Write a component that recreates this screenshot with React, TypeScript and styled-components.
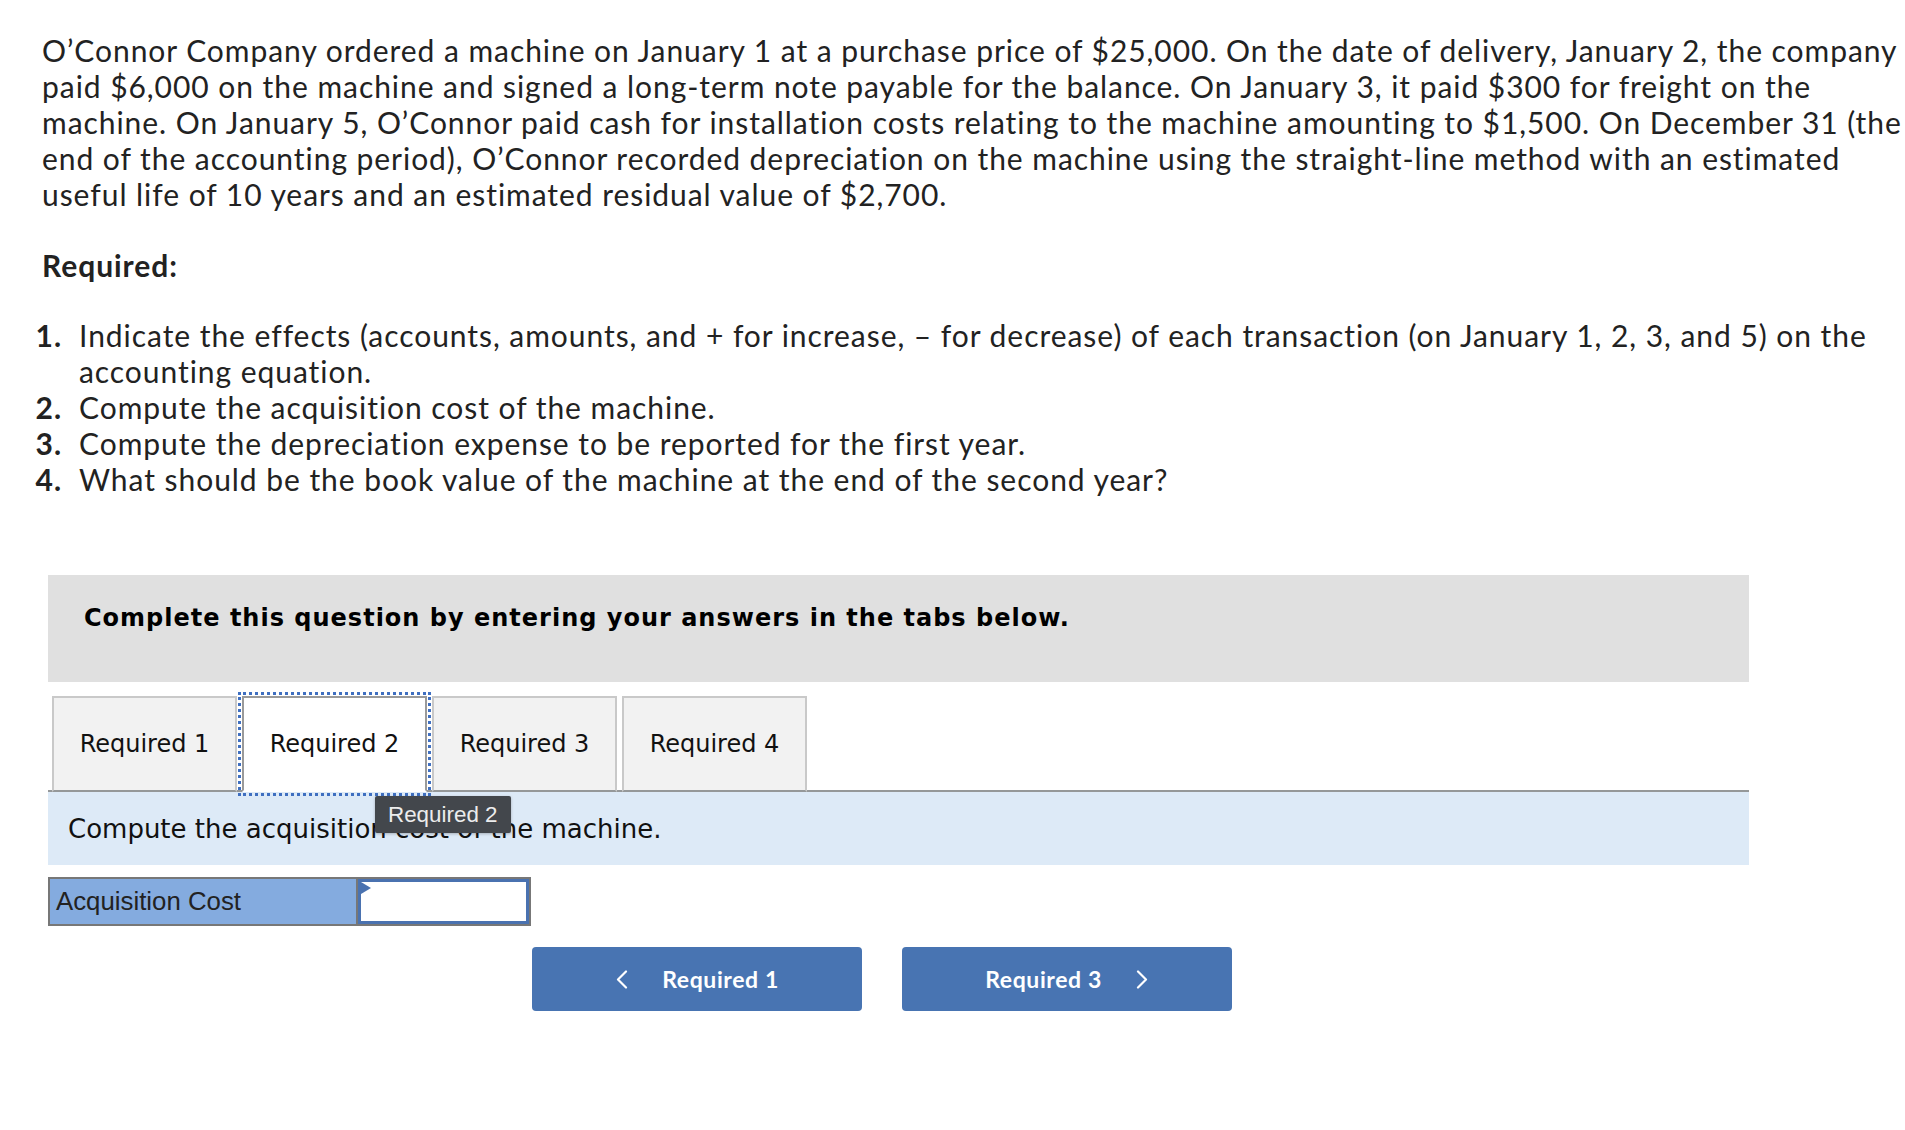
import styled, { createGlobalStyle } from "styled-components";

const GlobalStyle = createGlobalStyle`
  body {
    margin: 0;
    background: #ffffff;
  }
`;

const Page = styled.div`
  padding: 32px 0 60px 42px;
  font-family: Lato, "Noto Sans", sans-serif;
  color: #222222;
`;

const Problem = styled.p`
  margin: 0;
  font-size: 30px;
  line-height: 36px;
  letter-spacing: 0.95px;
`;

const RequiredHeading = styled.h4`
  margin: 35px 0 0;
  font-size: 30px;
  line-height: 36px;
  font-weight: 700;
  letter-spacing: 0.95px;
`;

const TaskList = styled.ol`
  list-style: none;
  margin: 34px 0 0 -12px;
  padding: 0;
  font-size: 30px;
  line-height: 36px;
  letter-spacing: 0.95px;
`;

const TaskItem = styled.li`
  display: grid;
  grid-template-columns: 32px 1fr;
  column-gap: 17px;
`;

const TaskNumber = styled.span`
  text-align: right;
  font-weight: 700;
`;

const Panel = styled.section`
  margin: 78px 0 0 6px;
  width: 1701px;
`;

const Banner = styled.div`
  height: 107px;
  box-sizing: border-box;
  padding: 29px 0 0 36px;
  background: #e0e0e0;
  font-family: "DejaVu Sans", Verdana, sans-serif;
  font-size: 24px;
  line-height: 28px;
  letter-spacing: 1px;
  font-weight: 700;
  color: #000000;
`;

const TabBar = styled.div`
  display: flex;
  gap: 5px;
  padding: 14px 0 0 4px;
  border-bottom: 2px solid #959899;
`;

const Tab = styled.button<{ $active?: boolean }>`
  position: relative;
  width: 185px;
  height: 96px;
  margin-bottom: -2px;
  border: 2px solid ${(p) => (p.$active ? "#9a9a9a" : "#c9c9c9")};
  border-bottom: ${(p) => (p.$active ? "2px solid #ffffff" : "2px solid #959899")};
  background: ${(p) => (p.$active ? "#ffffff" : "#f2f2f2")};
  outline: ${(p) => (p.$active ? "3px dotted #3f6fc0" : "none")};
  outline-offset: 1px;
  font-family: "DejaVu Sans", Verdana, sans-serif;
  font-size: 24px;
  color: #111111;
  padding: 0;
  cursor: pointer;
`;

const Tooltip = styled.span`
  position: absolute;
  left: 131px;
  top: 98px;
  z-index: 2;
  padding: 0 13px;
  height: 37px;
  line-height: 37px;
  background: #43474c;
  color: #ececec;
  border-radius: 2px;
  box-shadow: 0 1px 3px rgba(0, 0, 0, 0.25);
  font-family: "Liberation Sans", Arial, sans-serif;
  font-size: 22.4px;
  letter-spacing: 0;
  white-space: nowrap;
`;

const Instruction = styled.div`
  display: flex;
  align-items: center;
  height: 73px;
  padding-left: 20px;
  background: #ddeaf7;
  font-family: "DejaVu Sans", Verdana, sans-serif;
  font-size: 26px;
  color: #111111;
`;

const AnswerTable = styled.div`
  display: flex;
  width: 483px;
  height: 49px;
  margin-top: 12px;
  box-sizing: border-box;
  border: 2px solid #777777;
`;

const LabelCell = styled.div`
  display: flex;
  align-items: center;
  width: 308px;
  padding-left: 6px;
  box-sizing: border-box;
  background: #84abdf;
  border-right: 2px solid #777777;
  font-family: "Liberation Sans", Arial, sans-serif;
  font-size: 25.8px;
  color: #222222;
`;

const InputCell = styled.div`
  position: relative;
  flex: 1;
  border: 3px solid #4a72b0;
  background: #ffffff;

  &::before {
    content: "";
    position: absolute;
    left: 0;
    top: 0;
    border-top: 6px solid transparent;
    border-bottom: 6px solid transparent;
    border-left: 10px solid #4a72b0;
  }
`;

const AmountInput = styled.input`
  width: 100%;
  height: 100%;
  border: none;
  outline: none;
  background: transparent;
  box-sizing: border-box;
`;

const ButtonRow = styled.div`
  display: flex;
  gap: 40px;
  margin-top: 21px;
  padding-left: 484px;
`;

const NavButton = styled.button`
  display: flex;
  align-items: center;
  justify-content: center;
  gap: 33px;
  width: 330px;
  height: 64px;
  border: none;
  border-radius: 4px;
  background: #4874b2;
  color: #ffffff;
  font-family: Lato, "Noto Sans", sans-serif;
  font-size: 23px;
  letter-spacing: 0.6px;
  font-weight: 700;
  cursor: pointer;
`;

const Chevron = ({ dir }: { dir: "left" | "right" }) => (
  <svg width="14" height="19" viewBox="0 0 14 19" fill="none">
    <path
      d={dir === "left" ? "M11 1.5 L3 9.5 L11 17.5" : "M3 1.5 L11 9.5 L3 17.5"}
      stroke="#ffffff"
      strokeWidth="2.2"
      strokeLinecap="round"
      strokeLinejoin="round"
    />
  </svg>
);

const tasks = [
  "Indicate the effects (accounts, amounts, and + for increase, – for decrease) of each transaction (on January 1, 2, 3, and 5) on the accounting equation.",
  "Compute the acquisition cost of the machine.",
  "Compute the depreciation expense to be reported for the first year.",
  "What should be the book value of the machine at the end of the second year?",
];

const tabs = ["Required 1", "Required 2", "Required 3", "Required 4"];

export default function App() {
  return (
    <Page>
      <GlobalStyle />
      <Problem>
        O’Connor Company ordered a machine on January 1 at a purchase price of $25,000. On the date of
        delivery, January 2, the company paid $6,000 on the machine and signed a long-term note payable
        for the balance. On January 3, it paid $300 for freight on the machine. On January 5, O’Connor
        paid cash for installation costs relating to the machine amounting to $1,500. On December 31
        (the end of the accounting period), O’Connor recorded depreciation on the machine using the
        straight-line method with an estimated useful life of 10 years and an estimated residual value of
        $2,700.
      </Problem>
      <RequiredHeading>Required:</RequiredHeading>
      <TaskList>
        {tasks.map((t, i) => (
          <TaskItem key={i}>
            <TaskNumber>{i + 1}.</TaskNumber>
            <span>{t}</span>
          </TaskItem>
        ))}
      </TaskList>

      <Panel>
        <Banner>Complete this question by entering your answers in the tabs below.</Banner>
        <TabBar>
          {tabs.map((t) => (
            <Tab key={t} $active={t === "Required 2"}>
              {t}
              {t === "Required 2" && <Tooltip>Required 2</Tooltip>}
            </Tab>
          ))}
        </TabBar>
        <Instruction>Compute the acquisition cost of the machine.</Instruction>
        <AnswerTable>
          <LabelCell>Acquisition Cost</LabelCell>
          <InputCell>
            <AmountInput aria-label="Acquisition Cost" />
          </InputCell>
        </AnswerTable>
        <ButtonRow>
          <NavButton>
            <Chevron dir="left" />
            Required 1
          </NavButton>
          <NavButton>
            Required 3
            <Chevron dir="right" />
          </NavButton>
        </ButtonRow>
      </Panel>
    </Page>
  );
}
